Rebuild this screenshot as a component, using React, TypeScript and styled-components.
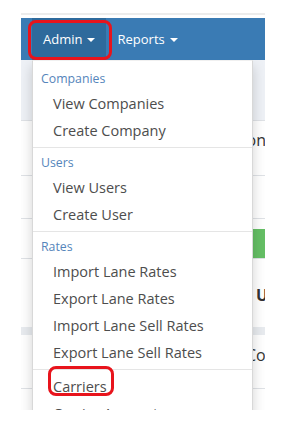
import styled, { createGlobalStyle } from 'styled-components'

const GlobalStyle = createGlobalStyle`
  body {
    margin: 0;
    background-color: #ffffff;
    font-family: "Open Sans", "Liberation Sans", sans-serif;
  }
`

const Frame = styled.div`
  width: 244px;
  padding: 13px 0 0 21px;
`
const TopRule = styled.div`
  height: 2px;
  background-color: #ececec;
  margin-bottom: 3px;
`
const Navbar = styled.nav`
  display: flex;
  height: 42px;
  padding-left: 11px;
  background-color: #3a7bb4;
`
const NavItem = styled.div<{ $active?: boolean }>`
  position: relative;
  display: flex;
  align-items: center;
  gap: 5px;
  padding: 0 11px;
  font-size: 13px;
  color: #ffffff;
  background-color: ${p => (p.$active ? '#2e6a9c' : 'transparent')};
`
const Caret = styled.span`
  width: 0;
  height: 0;
  margin-top: 2px;
  border-top: 4px solid #ffffff;
  border-left: 4.5px solid transparent;
  border-right: 4.5px solid transparent;
`
const Callout = styled.span<{ $left: number; $top: number; $w: number; $h: number }>`
  position: absolute;
  left: ${p => p.$left}px;
  top: ${p => p.$top}px;
  width: ${p => p.$w}px;
  height: ${p => p.$h}px;
  box-sizing: border-box;
  border: 3px solid #e8141c;
  border-radius: 8px;
  pointer-events: none;
`
const Stage = styled.div`
  position: relative;
  height: 350px;
  overflow: hidden;
`
const Row = styled.div<{ $h: number; $bg?: string; $line?: boolean }>`
  display: flex;
  box-sizing: border-box;
  height: ${p => p.$h}px;
  background-color: ${p => p.$bg ?? '#ffffff'};
  border-bottom: ${p => (p.$line ? '1px solid #dfe2e6' : 'none')};
  white-space: nowrap;
  overflow: hidden;
`
const PageText = styled.span<{ $indent?: number; $top: number; $bold?: boolean }>`
  padding-left: ${p => p.$indent ?? 0}px;
  padding-top: ${p => p.$top}px;
  font-size: 16px;
  line-height: 22px;
  font-weight: ${p => (p.$bold ? 700 : 400)};
  color: #333333;
`
const TitleText = styled(PageText)`
  margin-left: auto;
  margin-right: -1px;
`
const GreenButton = styled.div`
  margin-left: auto;
  align-self: flex-end;
  width: 40px;
  height: 29px;
  background-color: #65bf65;
`
const Menu = styled.div`
  position: absolute;
  top: 0;
  left: 11px;
  width: 221px;
  box-sizing: border-box;
  padding: 6px 0;
  background-color: #ffffff;
  border: 1px solid rgba(0, 0, 0, 0.15);
  border-top: 1px solid rgba(0, 0, 0, 0.06);
  box-shadow: 0 6px 12px rgba(0, 0, 0, 0.175);
`
const MenuHeader = styled.div`
  height: 23px;
  line-height: 23px;
  padding-left: 8px;
  font-size: 12.3px;
  color: #5585bb;
`
const MenuItem = styled.div`
  position: relative;
  height: 27px;
  line-height: 27px;
  padding-left: 20px;
  font-size: 14.5px;
  color: #4d4d4d;
  white-space: nowrap;
`
const Divider = styled.div`
  height: 1px;
  margin: 3px 0;
  background-color: #e5e5e5;
`

const groups = [
  { title: 'Companies', items: ['View Companies', 'Create Company'] },
  { title: 'Users', items: ['View Users', 'Create User'] },
  { title: 'Rates', items: ['Import Lane Rates', 'Export Lane Rates', 'Import Lane Sell Rates', 'Export Lane Sell Rates'] },
]

export default function App() {
  return (
    <>
      <GlobalStyle />
      <Frame>
        <TopRule />
        <Navbar>
          <NavItem $active>
            Admin <Caret />
            <Callout $left={-4} $top={2} $w={84} $h={40} />
          </NavItem>
          <NavItem>
            Reports <Caret />
          </NavItem>
        </Navbar>
        <Stage>
          <Row $h={61} $bg="#eef1f6" $line />
          <Row $h={55} $line>
            <TitleText $top={8}>Administration</TitleText>
          </Row>
          <Row $h={43} $line />
          <Row $h={40} $line>
            <GreenButton />
          </Row>
          <Row $h={68}>
            <PageText $indent={235} $top={25} $bold>Unit</PageText>
          </Row>
          <Row $h={8} $bg="#e8ebef" />
          <Row $h={54} $line>
            <PageText $indent={225} $top={9}>Contacts</PageText>
          </Row>

          <Menu>
            {groups.map((g, i) => (
              <div key={g.title}>
                {i > 0 && <Divider />}
                <MenuHeader>{g.title}</MenuHeader>
                {g.items.map(item => (
                  <MenuItem key={item}>{item}</MenuItem>
                ))}
              </div>
            ))}
            <Divider />
            <MenuItem>
              Carriers
              <Callout $left={15} $top={-7} $w={66} $h={30} />
            </MenuItem>
            <MenuItem>Carrier Accounts</MenuItem>
          </Menu>
        </Stage>
      </Frame>
    </>
  )
}
